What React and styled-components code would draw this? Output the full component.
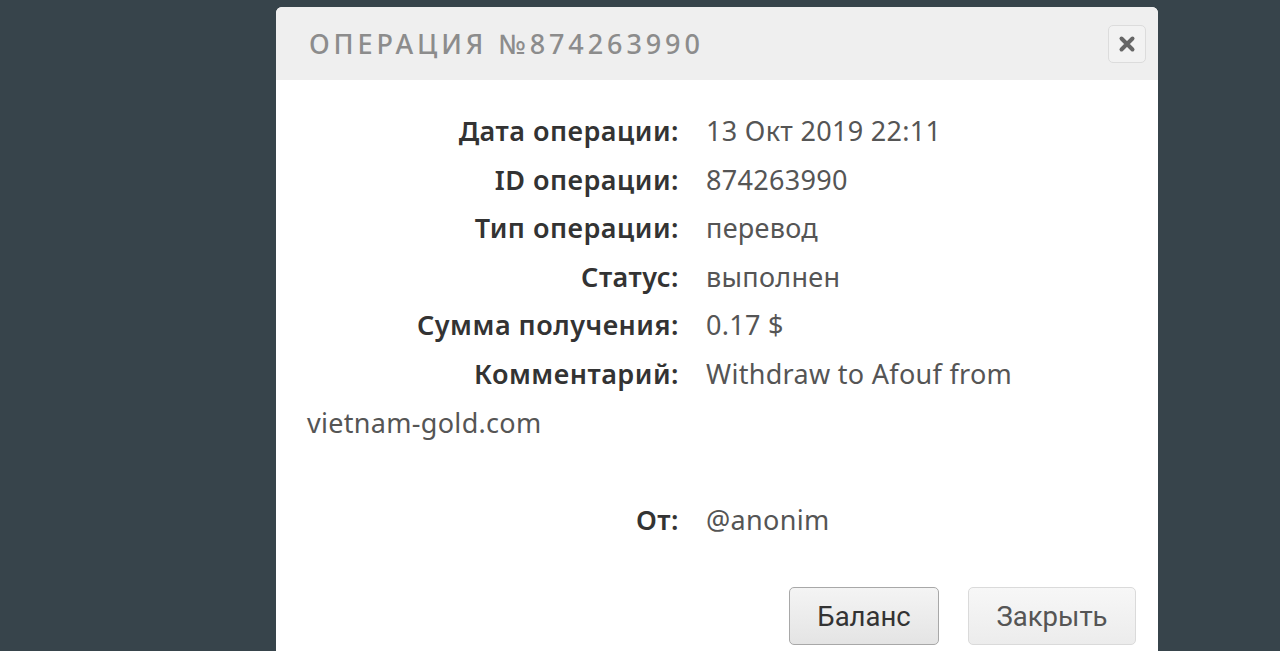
import React from "react";
import styled, { createGlobalStyle } from "styled-components";

const Global = createGlobalStyle`
  html, body { margin: 0; padding: 0; }
  body {
    background: #37444b;
    height: 651px;
    overflow: hidden;
    font-family: "Noto Sans", "Open Sans", sans-serif;
  }
`;

const Page = styled.div`
  display: flex;
  padding-top: 7px;
  padding-left: 276px;
  height: 651px;
  box-sizing: border-box;
`;

const Modal = styled.div`
  width: 882px;
  background: #ffffff;
  border-radius: 6px 6px 0 0;
  overflow: hidden;
  display: flex;
  flex-direction: column;
`;

const Header = styled.div`
  height: 73px;
  flex-shrink: 0;
  background: #efefef;
  display: flex;
  align-items: center;
  justify-content: space-between;
  padding: 0 12px 0 33px;
  box-sizing: border-box;
`;

const Title = styled.h2`
  margin: 0;
  font-family: "Noto Sans", sans-serif;
  font-weight: 500;
  font-size: 27px;
  letter-spacing: 3.9px;
  color: #8c8c8c;
  text-transform: uppercase;
`;

const CloseX = styled.button`
  width: 38px;
  height: 38px;
  border: 1px solid #dcdcdc;
  border-radius: 5px;
  background: #f2f2f2;
  display: flex;
  align-items: center;
  justify-content: center;
  padding: 0;
`;

const Body = styled.div`
  padding: 27px 32px 0 31px;
  font-size: 27px;
  letter-spacing: 0.3px;
  line-height: 48.6px;
`;

const Row = styled.div`
  color: #555;
  min-height: 48.6px;
`;

const Label = styled.span`
  display: inline-block;
  width: 372px;
  text-align: right;
  margin-right: 27px;
  font-weight: 600;
  font-size: 27px;
  letter-spacing: 0.5px;
  color: #333;
`;

const NoWrap = styled.span`
  white-space: nowrap;
`;

const Footer = styled.div`
  display: flex;
  justify-content: flex-end;
  gap: 29px;
  padding: 43px 22px 0 0;
`;

const Button = styled.button`
  height: 58px;
  padding: 0 20px;
  min-width: ${(p) => (p.$primary ? 150 : 168)}px;
  border-radius: 5px;
  border: 1px solid ${(p) => (p.$primary ? "#a8a8a8" : "#dadada")};
  background: ${(p) =>
    p.$primary
      ? "linear-gradient(#f4f4f4, #e4e4e4)"
      : "linear-gradient(#f7f7f7, #ececec)"};
  font-family: Roboto, sans-serif;
  font-size: 27.5px;
  color: ${(p) => (p.$primary ? "#333" : "#555")};
`;

const rows = [
  ["Дата операции:", "13 Окт 2019 22:11"],
  ["ID операции:", "874263990"],
  ["Тип операции:", "перевод"],
  ["Статус:", "выполнен"],
  ["Сумма получения:", "0.17 $"],
  [
    "Комментарий:",
    <>
      Withdraw to Afouf from <NoWrap>vietnam-gold.com</NoWrap>
    </>,
  ],
];

export default function App() {
  return (
    <>
      <Global />
      <Page>
        <Modal>
          <Header>
            <Title>Операция №874263990</Title>
            <CloseX aria-label="close">
              <svg width="18" height="18" viewBox="0 0 18 18">
                <path
                  d="M3.5 3.5 L14.5 14.5 M14.5 3.5 L3.5 14.5"
                  stroke="#666"
                  strokeWidth="4"
                  strokeLinecap="round"
                />
              </svg>
            </CloseX>
          </Header>
          <Body>
            {rows.map(([l, v]) => (
              <Row key={l}>
                <Label>{l}</Label>
                {v}
              </Row>
            ))}
            <Row />
            <Row>
              <Label>От:</Label>@anonim
            </Row>
          </Body>
          <Footer>
            <Button $primary>Баланс</Button>
            <Button>Закрыть</Button>
          </Footer>
        </Modal>
      </Page>
    </>
  );
}
